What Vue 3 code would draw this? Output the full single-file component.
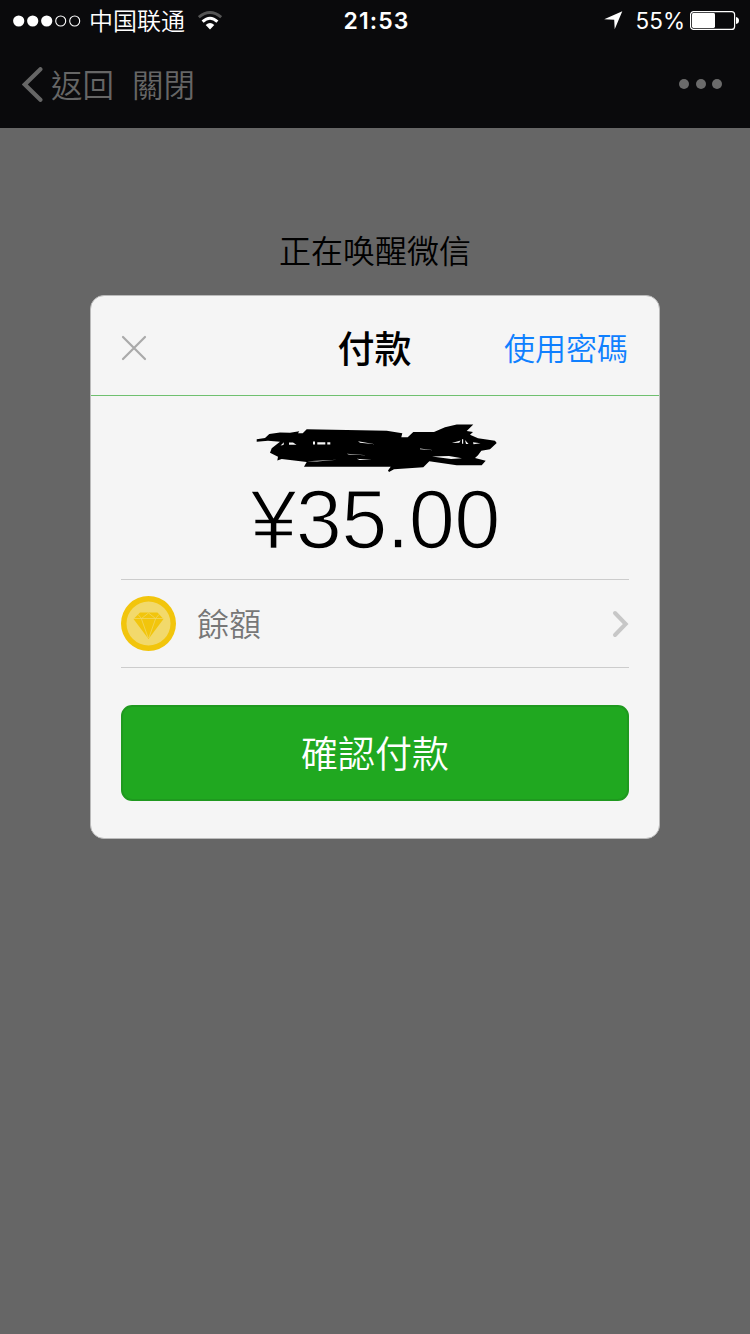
<script setup>
const signal = [true, true, true, false, false]
</script>

<template>
  <div class="screen">
    <header class="top">
      <div class="status">
        <div class="side">
          <svg class="signal" width="68" height="12" viewBox="0 0 68 12">
            <template v-for="(on, i) in signal" :key="i">
              <circle v-if="on" :cx="5.7 + i * 14" cy="6" r="5.6" fill="#fff" />
              <circle v-else :cx="5.7 + i * 14" cy="6" r="5" fill="none" stroke="#fff" stroke-width="1.1" />
            </template>
          </svg>
          <span class="carrier">中国联通</span>
          <svg class="wifi" width="24" height="19" viewBox="0 0 24 19">
            <path d="M0.8 6.2 Q12 -3.2 23.2 6.2" fill="none" stroke="#555" stroke-width="2.8" />
            <path d="M4.6 10.6 Q12 3.8 19.4 10.6" fill="none" stroke="#fff" stroke-width="3" />
            <path d="M7.7 14 Q12 10 16.3 14 L12 18.4 Z" fill="#fff" />
          </svg>
        </div>
        <span class="time">21:53</span>
        <div class="side right">
          <svg class="locate" width="19" height="19" viewBox="0 0 19 19">
            <path d="M18.3 0.2 L10.7 18.2 L10.2 8.7 L0.2 8.2 Z" fill="#fff" />
          </svg>
          <span class="percent">55%</span>
          <svg class="battery" width="50" height="19" viewBox="0 0 50 19">
            <rect x="0.6" y="0.6" width="44" height="17.8" rx="3" fill="none" stroke="#fff" stroke-width="1.2" />
            <rect x="2" y="2" width="23" height="15" rx="1.4" fill="#fff" />
            <path d="M46 6 Q49 6.5 49 9.5 Q49 12.5 46 13 Z" fill="#fff" />
          </svg>
        </div>
      </div>
      <nav class="nav">
        <svg width="21" height="35" viewBox="0 0 21 35">
          <path d="M18.4 2.2 L2.8 17.5 L18.4 32.8" fill="none" stroke="#666" stroke-width="4.2" stroke-linecap="round" stroke-linejoin="miter" />
        </svg>
        <span class="back">返回</span>
        <span class="close">關閉</span>
        <div class="more"><i></i><i></i><i></i></div>
      </nav>
    </header>

    <p class="message">正在唤醒微信</p>

    <section class="dialog">
      <div class="head">
        <svg class="x" width="26" height="26" viewBox="0 0 26 26">
          <path d="M2 2 L24 24 M24 2 L2 24" stroke="#aaa" stroke-width="2.2" stroke-linecap="round" />
        </svg>
        <h1>付款</h1>
        <a>使用密碼</a>
      </div>
      <div class="body">
        <svg class="scribble" width="242" height="50" viewBox="0 -1 242 50">
          <path d="M0.7 15.3 V17.7 L12 16.7 L24 17.7 L15.7 24.3 L14 28.7 L22 32.7 L21.3 36.5 L25.7 35 L50.7 38 L48 42.7 H134.7 L132 46.5 L133 48 L138 45.3 L167.3 43.3 L173.3 37.3 L200.7 41.3 H225.7 L229.7 36.7 L219 34 L222 31.3 L225.3 26.7 L234 25.3 L240.7 19 L239 16.7 L222 14.3 L214 10.7 L217 8 L210.7 7 L217.3 0.5 H200.7 L189 3.3 L178 8 H157.3 L151.7 13.3 H145.3 L146.3 9.3 L130.7 6.7 L50.7 5.3 L46.7 9.3 H42 L43.3 7.3 L34 8.7 L24 8.5 L13.3 10 L9 14 Z" fill="#000" />
          <path d="M24.5 21.5 L28 18.3 L27.5 21 Z M33 18.5 h4 l3.5 2.2 h-7.5z M57 17.5 h2 v3 h-2z M61.3 18.3 h8 v2.2 h-8z M71.3 18.3 h3 v2.2 h-3z M102 17.3 l17 3 -15 -1.5z M51 37.2 l30 -1.4 -20 1.8z M100.7 34.7 l15 1.3 -12 0z M90.7 29.7 l20 1.5 -18 -0.8z M164 24.5 l14 1.7 -14 -1z M195.7 19 l9 -2.6 -1.5 2.4z M206 15.3 h1.2 v4.5 h-1.2z M209 16 l3.5 4 h-2.5z M217 18.3 l7.5 1 -7 1z M176 32.4 l17 -0.5 13 2.4 -11 0.6z" fill="#f5f5f5" />
        </svg>
        <div class="amount">¥35.00</div>
        <div class="method">
          <svg class="coin" width="55" height="55" viewBox="0 0 55 55">
            <circle cx="27.5" cy="27.5" r="27.5" fill="#f2c50c" />
            <circle cx="27.5" cy="27.5" r="22" fill="#f2d96b" />
            <path d="M19 16.5 H36.5 L42.5 23 L27.5 43 L12.5 23 Z" fill="#f2c50c" />
            <path d="M12.5 22.5 H42.5 M17 18.5 L20.5 22.5 L27.5 17 L34.5 22.5 L38 18.5 M20.5 23 L27.2 42 M34.5 23 L27.8 42" fill="none" stroke="#f2d96b" stroke-width="0.7" />
          </svg>
          <span>餘額</span>
          <svg class="chevron" width="17" height="28" viewBox="0 0 17 28">
            <path d="M3 3 L13.7 14 L3 25" fill="none" stroke="#c7c7c7" stroke-width="4" stroke-linecap="round" />
          </svg>
        </div>
        <button><span>確認付款</span></button>
      </div>
    </section>
  </div>
</template>

<style>
body {
  margin: 0;
  background: #666;
}
</style>

<style scoped>
.screen {
  width: 750px;
  height: 1334px;
  overflow: hidden;
  background: #666;
  color: #000;
  font-family: "Noto Sans CJK TC", "Noto Sans CJK SC", sans-serif;
  font-weight: 350;
}
.top {
  height: 128px;
  background: #0a0a0c;
}
.status {
  display: flex;
  align-items: center;
  height: 40px;
  padding: 0 10px 0 13px;
  color: #fff;
}
.side {
  display: flex;
  align-items: center;
  flex: 1 1 0;
}
.right {
  justify-content: flex-end;
}
.signal {
  margin-top: 1px;
}
.carrier {
  margin-left: 8px;
  font: 350 24px/40px "Noto Sans CJK SC", sans-serif;
}
.wifi {
  margin-left: 13px;
}
.time {
  font: 600 23px/40px Inter, sans-serif;
  letter-spacing: 1.1px;
  margin-top: 2px;
}
.percent {
  margin: 2px 5px 0 13px;
  font: 400 22.5px/40px Inter, sans-serif;
}
.battery {
  margin-top: 1px;
}
.nav {
  display: flex;
  align-items: center;
  height: 88px;
  padding: 0 28px 0 22px;
  color: #666;
  font-size: 31.5px;
  line-height: 86px;
}
.back,
.close {
  margin-top: -2px;
}
.back {
  margin-left: 8px;
}
.close {
  margin-left: 18px;
}
.more {
  display: flex;
  gap: 6.5px;
  margin-left: auto;
}
.more i {
  width: 10px;
  height: 10px;
  border-radius: 50%;
  background: #6b6b6b;
}
.message {
  margin: 98px 0 0;
  text-align: center;
  font: 350 32px/46px "Noto Sans CJK SC", sans-serif;
}
.dialog {
  box-sizing: border-box;
  width: 570px;
  height: 544px;
  margin: 23px auto 0;
  border: 1px solid #bbb;
  border-radius: 14px;
  background: #f5f5f5;
}
.head {
  display: grid;
  grid-template-columns: 1fr auto 1fr;
  align-items: center;
  height: 99px;
  padding: 0 31px 0 30px;
  border-bottom: 1px solid #6fc06f;
}
.x {
  margin-top: 4px;
}
.head h1 {
  margin: 2px 0 0;
  font-size: 37px;
  line-height: 60px;
  font-weight: 500;
}
.head a {
  justify-self: end;
  margin-top: 2px;
  color: #0f80ff;
  font-size: 31px;
  line-height: 60px;
}
.body {
  display: flex;
  flex-direction: column;
  padding: 27px 30px 0;
}
.scribble {
  align-self: center;
  margin-left: 4px;
  overflow: visible;
}
.amount {
  height: 106px;
  text-align: center;
  font: 400 83px/93px "Liberation Sans", Arial, sans-serif;
  letter-spacing: -0.8px;
  -webkit-text-stroke: 1.6px #f5f5f5;
}
.method {
  display: flex;
  align-items: center;
  height: 87px;
  border-top: 1px solid #ccc;
  border-bottom: 1px solid #ccc;
  color: #777;
  font-size: 32px;
}
.method span {
  margin: -4px 0 0 21px;
}
.chevron {
  margin-left: auto;
}
button {
  height: 96px;
  margin: 37px 0 0;
  padding: 0 0 2px;
  border: 2px solid #1f991f;
  border-radius: 11px;
  background: #20a820;
  color: #fff;
  font: inherit;
  font-size: 37px;
}
</style>
